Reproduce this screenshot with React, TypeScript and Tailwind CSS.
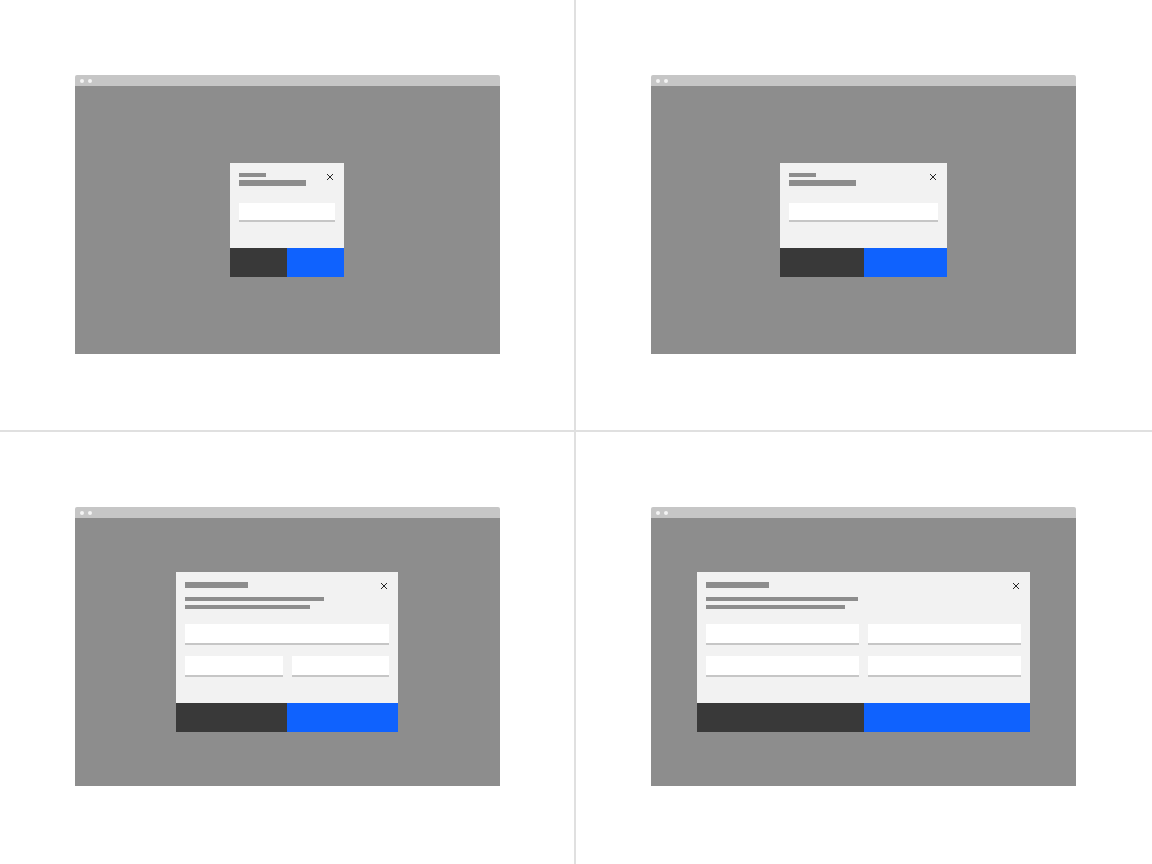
import React from 'react';

type Size = 'sm' | 'md' | 'lg' | 'xl';

const CloseIcon: React.FC = () => (
  <svg width="8" height="8" viewBox="0 0 8 8" className="absolute top-[10px] right-[10px]">
    <path d="M1 1 L7 7 M7 1 L1 7" stroke="#262626" strokeWidth="1" />
  </svg>
);

const Field: React.FC<{ className?: string }> = ({ className = '' }) => (
  <div className={`bg-white border-b-2 border-[#c6c6c6] ${className}`} />
);

const Buttons: React.FC = () => (
  <div className="flex h-[29px]">
    <div className="flex-1 bg-[#393939]" />
    <div className="flex-1 bg-[#0f62fe]" />
  </div>
);

// small/medium: one field, short heading
const SimpleModal: React.FC<{ width: string }> = ({ width }) => (
  <div className={`relative bg-[#f2f2f2] ${width}`}>
    <CloseIcon />
    <div className="px-[9px] pt-[10px] pb-[26px]">
      <div className="h-[4px] w-[27px] bg-[#8d8d8d]" />
      <div className="mt-[3px] h-[6px] w-[67px] bg-[#8d8d8d]" />
      <Field className="mt-[17px] h-[19px]" />
    </div>
    <Buttons />
  </div>
);

// large/x-large: heading, two lines of body text, two rows of fields
const FormModal: React.FC<{ width: string; wide?: boolean }> = ({ width, wide }) => (
  <div className={`relative bg-[#f2f2f2] ${width}`}>
    <CloseIcon />
    <div className="pl-[9px] pr-[9px] pt-[10px] pb-[26px]">
      <div className="h-[6px] w-[63px] bg-[#8d8d8d]" />
      <div className={`mt-[9px] h-[4px] bg-[#8d8d8d] ${wide ? 'w-[152px]' : 'w-[139px]'}`} />
      <div className={`mt-[4px] h-[4px] bg-[#8d8d8d] ${wide ? 'w-[139px]' : 'w-[125px]'}`} />
      {wide ? (
        <div className="mt-[15px] grid grid-cols-2 gap-x-[9px]">
          <Field className="h-[21px]" />
          <Field className="h-[21px]" />
        </div>
      ) : (
        <Field className="mt-[15px] h-[21px]" />
      )}
      <div className="mt-[11px] grid grid-cols-2 gap-x-[9px]">
        <Field className="h-[21px]" />
        <Field className="h-[21px]" />
      </div>
    </div>
    <Buttons />
  </div>
);

const BrowserWindow: React.FC<{ children: React.ReactNode }> = ({ children }) => (
  <div className="flex flex-col w-[425px] h-[279px]">
    <div className="h-[11px] bg-[#c6c6c6] rounded-t-[2px] flex items-center gap-[4px] px-[5px]">
      <span className="w-[4px] h-[4px] rounded-full bg-[#f4f4f4]" />
      <span className="w-[4px] h-[4px] rounded-full bg-[#f4f4f4]" />
    </div>
    <div className="flex-1 bg-[#8d8d8d] flex items-center justify-center pb-[1px]">{children}</div>
  </div>
);

const sizes: Size[] = ['sm', 'md', 'lg', 'xl'];

export default function App() {
  return (
    <div className="w-[1152px] h-[864px] bg-white grid grid-cols-2 grid-rows-2">
      {sizes.map((s, i) => (
        <div
          key={s}
          className={`flex items-center justify-center border-[#e0e0e0] ${i % 2 === 0 ? 'border-r-2' : 'pr-[1px]'} ${i < 2 ? 'border-b-2 pb-[1px]' : 'pb-[3px]'}`}
        >
          <BrowserWindow>
            {s === 'sm' && <SimpleModal width="w-[114px]" />}
            {s === 'md' && <SimpleModal width="w-[167px]" />}
            {s === 'lg' && <FormModal width="w-[222px]" />}
            {s === 'xl' && <FormModal width="w-[333px]" wide />}
          </BrowserWindow>
        </div>
      ))}
    </div>
  );
}
